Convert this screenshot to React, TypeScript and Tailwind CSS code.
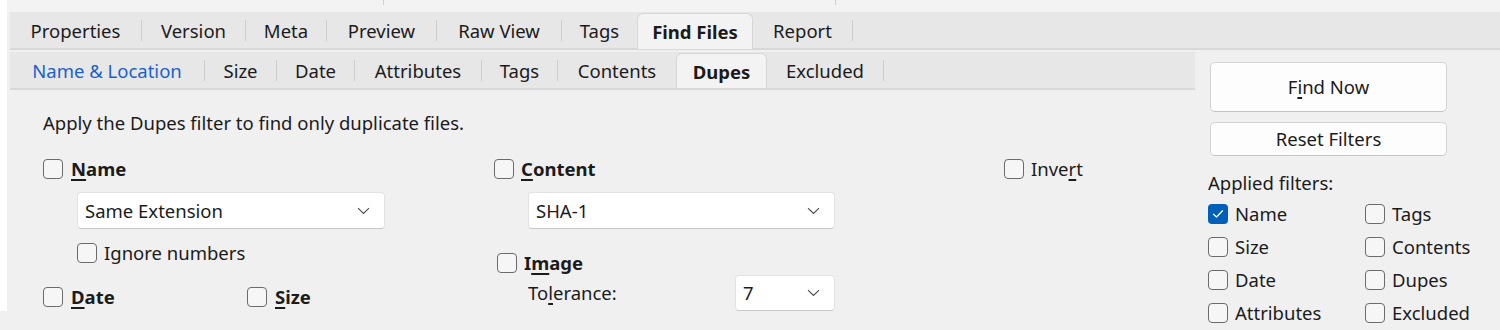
import React from "react";

type Tab = { label: string; w: string; active?: boolean; sep?: boolean; blue?: boolean };

const mainTabs: Tab[] = [
  { label: "Properties", w: "w-[131px]", sep: true },
  { label: "Version", w: "w-[103px]", sep: true },
  { label: "Meta", w: "w-[80px]", sep: true },
  { label: "Preview", w: "w-[109px]", sep: true },
  { label: "Raw View", w: "w-[124px]", sep: true },
  { label: "Tags", w: "w-[75px]" },
  { label: "Find Files", w: "w-[116px]", active: true },
  { label: "Report", w: "w-[99px]", sep: true },
];

const subTabs: Tab[] = [
  { label: "Name & Location", w: "w-[194px]", sep: true, blue: true },
  { label: "Size", w: "w-[71px]", sep: true },
  { label: "Date", w: "w-[77px]", sep: true },
  { label: "Attributes", w: "w-[126px]", sep: true },
  { label: "Tags", w: "w-[75px]", sep: true },
  { label: "Contents", w: "w-[118px]" },
  { label: "Dupes", w: "w-[91px]", active: true },
  { label: "Excluded", w: "w-[116px]", sep: true },
];

const applied = [
  ["Name", "Tags"],
  ["Size", "Contents"],
  ["Date", "Dupes"],
  ["Attributes", "Excluded"],
];

const Check = ({ checked = false }: { checked?: boolean }) =>
  checked ? (
    <div className="w-[20px] h-[20px] shrink-0 rounded-[4px] bg-[#005fb8] flex items-center justify-center">
      <svg width="12" height="10" viewBox="0 0 12 10" fill="none">
        <path d="M1.5 5.2 L4.5 8 L10.5 1.8" stroke="white" strokeWidth="1.3" strokeLinecap="round" strokeLinejoin="round" />
      </svg>
    </div>
  ) : (
    <div className="w-[20px] h-[20px] shrink-0 rounded-[4px] border border-[#6b6b6b] bg-[#f6f6f6]" />
  );

const Chevron = () => (
  <svg width="13" height="8" viewBox="0 0 13 8" fill="none">
    <path d="M1 1.2 L6.5 6.5 L12 1.2" stroke="#4a4a4a" strokeWidth="1.1" />
  </svg>
);

const Select = ({ value, w, h = "h-[37px]" }: { value: string; w: string; h?: string }) => (
  <div
    className={`${w} ${h} flex items-center justify-between pl-[7px] pr-[14px] bg-white rounded-[4px] border border-[#e2e2e2] border-b-[#c8c8c8]`}
  >
    <span>{value}</span>
    <Chevron />
  </div>
);

// label with one underlined access key
const Key = ({ pre = "", k, post = "" }: { pre?: string; k: string; post?: string }) => (
  <span>
    {pre}
    <span className="underline underline-offset-[3px] decoration-[1.5px]">{k}</span>
    {post}
  </span>
);

const TabBar = ({ tabs }: { tabs: Tab[] }) => (
  <div className="flex h-full">
    {tabs.map((t) => (
      <React.Fragment key={t.label}>
        <div
          className={`${t.w} h-full flex items-center justify-center pt-[1px] ${
            t.active
              ? "font-bold bg-[#f3f3f3] border border-b-0 border-[#d6d6d6] rounded-t-[6px] mt-[1px]"
              : ""
          } ${t.blue ? "text-[#1a5fcf]" : ""}`}
        >
          {t.label}
        </div>
        {t.sep && (
          <div className="w-px h-full flex items-center">
            <div className="w-px h-[21px] bg-[#cdcdcd]" />
          </div>
        )}
      </React.Fragment>
    ))}
  </div>
);

export default function App() {
  return (
    <div
      className="w-[1500px] h-[330px] overflow-hidden bg-[#f0f0f0] text-[#1b1b1b] text-[18.5px] flex"
      style={{ fontFamily: '"Noto Sans", "Open Sans", sans-serif' }}
    >
      <div className="w-[7px] h-[311px] bg-white shrink-0" />
      <div className="flex-1 flex flex-col">
        {/* top strip */}
        <div className="h-[12px] bg-[#f3f3f3] flex">
          <div className="w-[376px]" />
          <div className="w-px h-[5px] bg-[#cfcfcf]" />
          <div className="w-[451px]" />
          <div className="w-px h-[5px] bg-[#cfcfcf]" />
        </div>
        {/* main tabs */}
        <div className="pl-[3px]">
          <div className="h-[36px] bg-[#e7e7e7]">
            <TabBar tabs={mainTabs} />
          </div>
          <div className="h-[2px] bg-[#d8d8d8]" />
        </div>
        <div className="flex flex-1">
          {/* left: sub tabs + dupes page */}
          <div className="w-[1188px] flex flex-col pl-[3px]">
            <div className="mt-[2px] h-[36px] bg-[#e7e7e7]">
              <TabBar tabs={subTabs} />
            </div>
            <div className="h-[2px] bg-[#d8d8d8]" />
            <div className="pl-[33px] pt-[21px]">
              <div className="h-[24px] leading-[24px]">Apply the Dupes filter to find only duplicate files.</div>
              <div className="flex mt-[24px]">
                {/* name column */}
                <div className="w-[451px] flex flex-col">
                  <div className="flex items-center gap-[8px] h-[20px] font-bold">
                    <Check />
                    <Key k="N" post="ame" />
                  </div>
                  <div className="ml-[34px] mt-[13px]">
                    <Select value="Same Extension" w="w-[308px]" />
                  </div>
                  <div className="ml-[34px] mt-[14px] flex items-center gap-[7px] h-[20px]">
                    <Check />
                    <span>Ignore numbers</span>
                  </div>
                  <div className="mt-[24px] flex h-[20px] font-bold">
                    <div className="w-[204px] flex items-center gap-[8px]">
                      <Check />
                      <Key k="D" post="ate" />
                    </div>
                    <div className="flex items-center gap-[8px]">
                      <Check />
                      <Key k="S" post="ize" />
                    </div>
                  </div>
                </div>
                {/* content column */}
                <div className="w-[510px] flex flex-col">
                  <div className="flex items-center gap-[7px] h-[20px] font-bold">
                    <Check />
                    <Key k="C" post="ontent" />
                  </div>
                  <div className="ml-[34px] mt-[13px]">
                    <Select value="SHA-1" w="w-[307px]" />
                  </div>
                  <div className="ml-[3px] mt-[24px] flex items-center gap-[7px] h-[20px] font-bold">
                    <Check />
                    <Key pre="I" k="m" post="age" />
                  </div>
                  <div className="ml-[34px] mt-[2px] flex items-center">
                    <div className="w-[207px]">
                      <Key pre="To" k="l" post="erance:" />
                    </div>
                    <Select value="7" w="w-[100px]" h="h-[36px]" />
                  </div>
                </div>
                {/* invert */}
                <div className="flex items-center gap-[7px] h-[20px]">
                  <Check />
                  <Key pre="Inve" k="r" post="t" />
                </div>
              </div>
            </div>
          </div>
          {/* right panel */}
          <div className="flex-1 flex flex-col pl-[15px] pt-[12px]">
            <div className="w-[237px] h-[50px] rounded-[5px] border border-[#d4d4d4] border-b-[#c4c4c4] bg-[#fdfdfd] flex items-center justify-center">
              <Key pre="F" k="i" post="nd Now" />
            </div>
            <div className="mt-[10px] w-[237px] h-[34px] rounded-[5px] border border-[#d4d4d4] border-b-[#c4c4c4] bg-[#fdfdfd] flex items-center justify-center">
              Reset Filters
            </div>
            <div className="-ml-[2px] mt-[15px] h-[24px] leading-[24px]">Applied filters:</div>
            <div className="-ml-[2px] mt-[9px] flex flex-col gap-[13px]">
              {applied.map(([a, b], i) => (
                <div key={a} className="flex h-[20px]">
                  <div className="w-[157px] flex items-center gap-[7px]">
                    <Check checked={i === 0} />
                    <span>{a}</span>
                  </div>
                  <div className="flex items-center gap-[7px]">
                    <Check />
                    <span>{b}</span>
                  </div>
                </div>
              ))}
            </div>
          </div>
        </div>
      </div>
    </div>
  );
}
